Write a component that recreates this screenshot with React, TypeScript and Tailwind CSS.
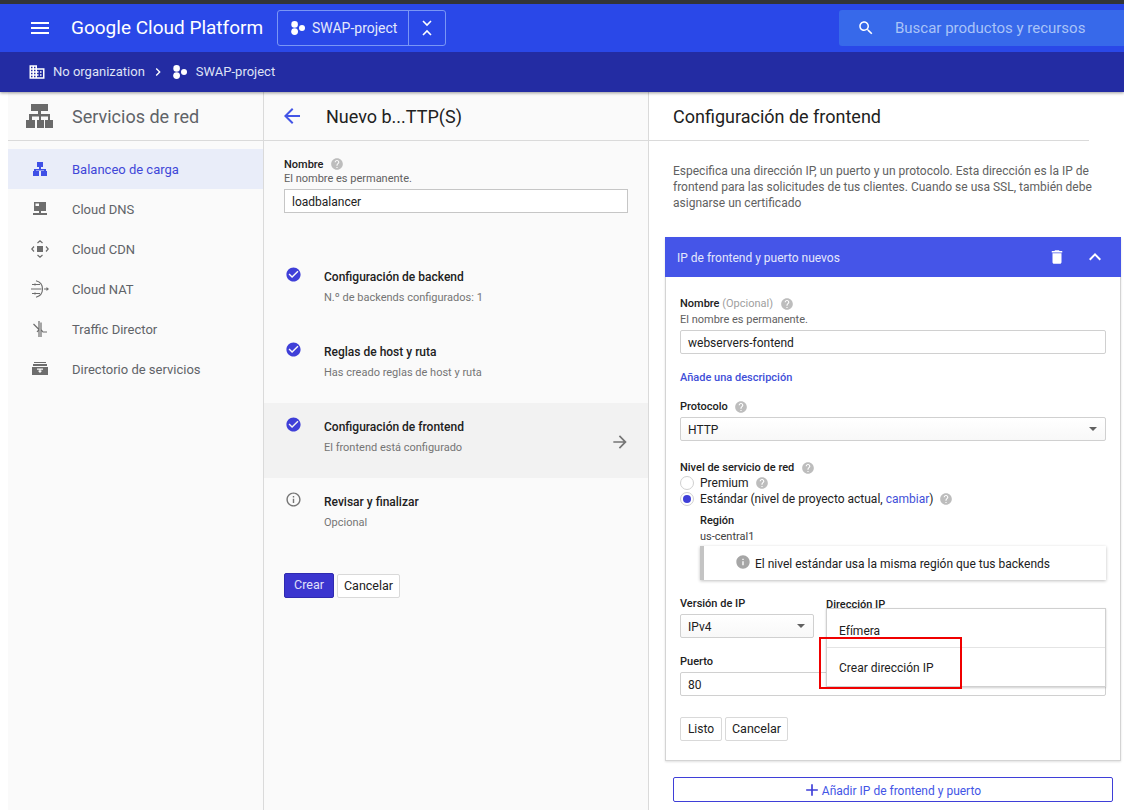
import type { ReactNode } from 'react';

// material style icons
const Icon = ({ d, className }: { d: string; className?: string }) => (
  <svg viewBox="0 0 24 24" className={className} fill="currentColor">
    <path d={d} />
  </svg>
);

const HELP =
  'M12 2C6.48 2 2 6.48 2 12s4.48 10 10 10 10-4.48 10-10S17.52 2 12 2zm1 17h-2v-2h2v2zm2.07-7.75l-.9.92C13.45 12.9 13 13.5 13 15h-2v-.5c0-1.1.45-2.1 1.17-2.83l1.24-1.26c.37-.36.59-.86.59-1.41 0-1.1-.9-2-2-2s-2 .9-2 2H8c0-2.21 1.79-4 4-4s4 1.79 4 4c0 .88-.36 1.68-.93 2.25z';
const CHECK =
  'M12 2C6.48 2 2 6.48 2 12s4.48 10 10 10 10-4.48 10-10S17.52 2 12 2zm-2 15l-5-5 1.41-1.41L10 14.17l7.59-7.59L19 8l-9 9z';
const INFO_OUTLINE =
  'M11 17h2v-6h-2v6zm1-15C6.48 2 2 6.48 2 12s4.48 10 10 10 10-4.48 10-10S17.52 2 12 2zm0 18c-4.41 0-8-3.59-8-8s3.59-8 8-8 8 3.59 8 8-3.59 8-8 8zM11 9h2V7h-2v2z';
const INFO =
  'M12 2C6.48 2 2 6.48 2 12s4.48 10 10 10 10-4.48 10-10S17.52 2 12 2zm1 15h-2v-6h2v6zm0-8h-2V7h2v2z';
const DOMAIN =
  'M12 7V3H2v18h20V7H12zM6 19H4v-2h2v2zm0-4H4v-2h2v2zm0-4H4V9h2v2zm0-4H4V5h2v2zm4 12H8v-2h2v2zm0-4H8v-2h2v2zm0-4H8V9h2v2zm0-4H8V5h2v2zm10 12h-8v-2h2v-2h-2v-2h2v-2h-2V9h8v10zm-2-8h-2v2h2v-2zm0 4h-2v2h2v-2z';

const Help = () => <Icon d={HELP} className="w-[14px] h-[14px] text-[#bdbdbd] shrink-0" />;

const ProjectDots = ({ className }: { className?: string }) => (
  <svg viewBox="0 0 14 14" className={className} fill="currentColor">
    <circle cx="3.6" cy="3.4" r="3.3" />
    <circle cx="3.6" cy="10.600" r="3.4" />
    <circle cx="11" cy="7" r="3" />
  </svg>
);

const Caret = () => (
  <svg viewBox="0 0 8 4" className="w-2 h-1 mr-px text-[#616161]" fill="currentColor">
    <path d="M0 0h8L4 4z" />
  </svg>
);

// drawn on an 18 unit grid, no matching icon in the packages
const navIcons: Record<string, ReactNode> = {
  balance: <path d="M6 2h6v5H10v2h5v2h1v5h-6v-5h3v-.6H5v.6h3v5H2v-5h1V9h5V7H6z" />,
  dns: <path d="M3 2h12v9H10v2h6v2H2v-2h6v-2H3zM4.500 3.500V6H8V3.500z" />,
  cdn: (
    <g>
      <rect x="6" y="6" width="6" height="6" />
      <path
        d="M6.500 3L9 .8 11.500 3M6.500 15L9 17.200 11.500 15M3 6.500L.8 9 3 11.500M15 6.500L17.200 9 15 11.500"
        fill="none"
        stroke="currentColor"
        strokeWidth="1.200"
      />
    </g>
  ),
  nat: (
    <g>
      <path
        d="M5 .8C9 1.800 11.500 5 11.500 9S9 16.200 5 17.200M1 4.500h8M0 9h10.500M1 13.500h8"
        fill="none"
        stroke="currentColor"
        strokeWidth="1.100"
      />
      <circle cx="4" cy="4.500" r="1" />
      <circle cx="4" cy="13.500" r="1" />
      <path d="M13 8.500h2.500V7L18 9l-2.500 2V9.500H13z" />
    </g>
  ),
  traffic: (
    <path
      d="M8 1v16M10 2.500V17M2.500 4L8 9.500M10 9.500l2 2.500h4M6 12l2-2.500"
      fill="none"
      stroke="currentColor"
      strokeWidth="1.200"
    />
  ),
  directory: (
    <path d="M3 2h12v1H3zM2 4h14v2H2zM1 7h16v8H1zM6 8.500v1.200h2.300v1H6.800L9 13l2.200-2.300H9.700v-1H12V8.500z" />
  ),
};

const navItems = [
  { key: 'balance', label: 'Balanceo de carga', active: true },
  { key: 'dns', label: 'Cloud DNS' },
  { key: 'cdn', label: 'Cloud CDN' },
  { key: 'nat', label: 'Cloud NAT' },
  { key: 'traffic', label: 'Traffic Director' },
  { key: 'directory', label: 'Directorio de servicios' },
];

const steps = [
  { title: 'Configuración de backend', sub: 'N.º de backends configurados: 1', icon: CHECK },
  { title: 'Reglas de host y ruta', sub: 'Has creado reglas de host y ruta', icon: CHECK },
  { title: 'Configuración de frontend', sub: 'El frontend está configurado', icon: CHECK, active: true },
  { title: 'Revisar y finalizar', sub: 'Opcional', icon: INFO_OUTLINE },
];

function TopBar() {
  return (
    <div className="shrink-0 relative z-10 shadow-[0_1px_3px_rgba(0,0,0,0.4)]">
      <div className="h-1 bg-[#333537]" />
      <div className="h-12 bg-[#2a48e8] flex items-center text-white">
        <Icon d="M3 18h18v-2H3v2zm0-5h18v-2H3v2zm0-7v2h18V6H3z" className="w-6 h-6 ml-[28px]" />
        <span className="ml-[19px] w-[192px] text-[19px] whitespace-nowrap">Google Cloud Platform</span>
        <div className="ml-[14px] h-9 w-[169px] flex border border-[#7a96f5] rounded-[3px]">
          <div className="w-[131px] flex items-center border-r border-[#7a96f5] pl-[13px] gap-[7px]">
            <ProjectDots className="w-[14px] h-[14px]" />
            <span className="text-[14px] text-[#e3e8fc]">SWAP-project</span>
          </div>
          <div className="flex-1 flex items-center justify-center">
            <svg viewBox="0 0 12 16" className="w-3 h-4" fill="none" stroke="currentColor" strokeWidth="1.600">
              <path d="M2 1l4 4 4-4M2 15l4-4 4 4" />
            </svg>
          </div>
        </div>
        <div className="ml-auto w-[285px] h-9 bg-[#3769ea] rounded-l-[3px] flex items-center">
          <Icon
            d="M15.500 14h-.79l-.28-.27C15.410 12.590 16 11.110 16 9.500 16 5.910 13.090 3 9.500 3S3 5.910 3 9.500 5.910 16 9.500 16c1.610 0 3.090-.59 4.230-1.570l.27.28v.79l5 4.990L20.490 19l-4.990-5zm-6 0C7.010 14 5 11.990 5 9.500S7.010 5 9.500 5 14 7.010 14 9.500 11.990 14 9.500 14z"
            className="w-[18px] h-[18px] ml-[18px]"
          />
          <span className="ml-[20px] text-[15px] text-[#a9c3f8] whitespace-nowrap">Buscar productos y recursos</span>
        </div>
      </div>
      <div className="h-10 bg-[#232ca3] flex items-center text-[#dfe2f5] text-[13px]">
        <Icon d={DOMAIN} className="w-[18px] h-[18px] ml-[28px] text-white" />
        <span className="ml-[7px]">No organization</span>
        <Icon d="M10 6L8.590 7.410 13.170 12l-4.580 4.590L10 18l6-6z" className="w-4 h-4 ml-[5px] text-white" />
        <ProjectDots className="w-[14px] h-[14px] ml-[7px] text-white" />
        <span className="ml-[9px]">SWAP-project</span>
      </div>
    </div>
  );
}

function Sidebar() {
  return (
    <aside className="ml-2 w-[256px] shrink-0 bg-[#fafafa] border-r border-[#dadada]">
      <div className="h-[49px] border-b border-[#dadada] flex items-center">
        <svg viewBox="0 0 27 24" className="ml-[18px] w-[27px] h-6 text-[#6a6a6a]" fill="currentColor">
          <path d="M5 0h17v7h-7v3h9v6h3v8h-8v-8h3v-3.500h-7V16h3v8h-7v-8h2v-3.500H6V16h3v8H0v-8h3v-6h9V7H5z" />
        </svg>
        <span className="ml-[19px] text-[18px] text-[#5f6368]">Servicios de red</span>
      </div>
      <nav className="pt-2">
        {navItems.map((item) => (
          <div
            key={item.key}
            className={`h-10 flex items-center text-[13px] ${
              item.active ? 'bg-[#e9edf9] text-[#3f47d8]' : 'text-[#5f6368]'
            }`}
          >
            <svg
              viewBox="0 0 18 18"
              className={`ml-[23px] w-[18px] h-[18px] ${item.active ? 'text-[#3f50e6]' : 'text-[#6d6d6d]'}`}
              fill="currentColor"
            >
              {navIcons[item.key]}
            </svg>
            <span className="ml-[23px] pt-[2px]">{item.label}</span>
          </div>
        ))}
      </nav>
    </aside>
  );
}

function Wizard() {
  return (
    <section className="w-[385px] shrink-0 bg-[#fafafa] border-r border-[#dadada]">
      <div className="h-[49px] border-b border-[#dadada] flex items-center">
        <Icon
          d="M20 11H7.830l5.590-5.590L12 4l-8 8 8 8 1.410-1.410L7.830 13H20v-2z"
          className="w-6 h-6 ml-4 text-[#4355e6]"
        />
        <span className="ml-[22px] text-[18px] text-[#212121]">Nuevo b...TTP(S)</span>
      </div>
      <div className="px-5 pt-[16px] h-[112px]">
        <div className="flex items-center gap-[6px] h-[14px]">
          <span className="text-[11px] pt-[2px] font-medium text-[#212121]">Nombre</span>
          <Help />
        </div>
        <div className="text-[11px] leading-[14px] mt-px text-[#616161]">El nombre es permanente.</div>
        <div className="mt-[3px] h-6 w-[344px] bg-white border border-[#c6c6c6] flex items-center px-[7px] pt-[2px] text-[12px] text-[#212121]">
          loadbalancer
        </div>
      </div>
      {steps.map((s) => (
        <div key={s.title} className={`h-[75px] flex pl-[21px] pt-[14px] relative ${s.active ? 'bg-[#f2f2f2]' : ''}`}>
          <Icon
            d={s.icon}
            className={`w-[17px] h-[17px] -mt-px shrink-0 ${s.icon === CHECK ? 'text-[#3f3fd8]' : 'text-[#757575]'}`}
          />
          <div className="ml-[22px] mt-[2px]">
            <div className="text-[12px] leading-[16px] font-medium text-[#212121]">{s.title}</div>
            <div className="mt-[5px] text-[11px] leading-[16px] text-[#757575]">{s.sub}</div>
          </div>
          {s.active && (
            <Icon
              d="M12 4l-1.410 1.410L16.170 11H4v2h12.170l-5.580 5.590L12 20l8-8z"
              className="w-5 h-5 absolute right-[18px] top-[29px] text-[#757575]"
            />
          )}
        </div>
      ))}
      <div className="mt-[20px] ml-5 flex gap-[3px]">
        <div className="h-[25px] w-[50px] bg-[#3b35cf] border border-[#2f2ab0] rounded-[2px] text-[12.500px] text-[#e0e0fa] flex items-center justify-center">
          Crear
        </div>
        <div className="h-[24px] w-[63px] mt-px bg-white border border-[#d9d9d9] rounded-[2px] text-[12.500px] text-[#212121] flex items-center justify-center">
          Cancelar
        </div>
      </div>
    </section>
  );
}

function FieldLabel({ children }: { children: ReactNode }) {
  return <div className="text-[11px] leading-[14px] font-medium text-[#212121] flex items-center gap-[6.5px]">{children}</div>;
}

function Field({ value, caret, className }: { value: string; caret?: boolean; className?: string }) {
  return (
    <div
      className={`h-6 border border-[#d0d0d0] rounded-[2px] flex items-center justify-between px-[7px] text-[12px] text-[#212121] ${
        caret ? 'bg-linear-to-b from-white to-[#f8f8f8]' : 'bg-white'
      } ${className ?? ''}`}
    >
      <span className="pt-[2px]">{value}</span>
      {caret && <Caret />}
    </div>
  );
}

function FrontendCard() {
  return (
    <div className="ml-4 w-[456px] shadow-[0_1px_2px_rgba(0,0,0,0.12)]">
      <div className="h-10 bg-[#4555e8] flex items-center text-white">
        <span className="ml-3 pt-[2px] text-[12px] text-[#e4e7fc]">IP de frontend y puerto nuevos</span>
        <Icon
          d="M6 19c0 1.100.9 2 2 2h8c1.100 0 2-.9 2-2V7H6v12zM19 4h-3.500l-1-1h-5l-1 1H5v2h14V4z"
          className="w-[18px] h-[18px] ml-auto"
        />
        <Icon d="M12 8l-6 6 1.410 1.410L12 10.830l4.590 4.580L18 14z" className="w-6 h-6 ml-[17px] mr-[14px]" />
      </div>
      <div className="relative border border-t-0 border-[#d4d4d4] px-[14px] pt-[20px] h-[484px] bg-white">
        <FieldLabel>
          <span>
            Nombre <span className="font-normal text-[#a0a0a0]">(Opcional)</span>
          </span>
          <Help />
        </FieldLabel>
        <div className="text-[11px] leading-[14px] mt-[2px] text-[#616161]">El nombre es permanente.</div>
        <Field value="webservers-fontend" className="mt-[3px]" />
        <div className="mt-[17px] text-[11px] leading-[14px] font-medium text-[#3f4fd8]">Añade una descripción</div>
        <div className="mt-[15px]">
          <FieldLabel>
            Protocolo
            <Help />
          </FieldLabel>
        </div>
        <Field value="HTTP" caret className="mt-[3px]" />
        <div className="mt-[20px]">
          <FieldLabel>
            Nivel de servicio de red
            <Help />
          </FieldLabel>
        </div>
        <div className="h-4 flex items-center text-[12px] text-[#212121]">
          <span className="w-[14px] h-[14px] rounded-full border border-[#d0d0d0] bg-white" />
          <span className="ml-[6px]">Premium</span>
          <span className="ml-[7px]">
            <Help />
          </span>
        </div>
        <div className="h-4 flex items-center text-[12px] text-[#212121]">
          <span className="w-[14px] h-[14px] rounded-full border border-[#d0d0d0] bg-white flex items-center justify-center">
            <span className="w-2 h-2 rounded-full bg-[#3f3fd8]" />
          </span>
          <span className="ml-[6px]">
            Estándar (nivel de proyecto actual, <span className="text-[#3f4fd8]">cambiar</span>)
          </span>
          <span className="ml-[6px]">
            <Help />
          </span>
        </div>
        <div className="ml-5">
          <div className="mt-[6px] text-[11px] leading-[16px] font-medium text-[#212121]">Región</div>
          <div className="text-[11px] leading-[16px] text-[#424242]">us-central1</div>
          <div className="mt-px h-[34px] border-l-4 border-[#c4c4c4] bg-white shadow-[0_1px_3px_rgba(0,0,0,0.25)] flex items-center pl-[31px] text-[12px] text-[#212121]">
            <Icon d={INFO} className="w-4 h-4 text-[#a6a6a6] -mt-[2px]" />
            <span className="ml-[4px] pt-[2px]">El nivel estándar usa la misma región que tus backends</span>
          </div>
        </div>
        <div className="mt-[17px]">
          <FieldLabel>Versión de IP</FieldLabel>
        </div>
        <Field value="IPv4" caret className="mt-[3px] w-[134px]" />
        <div className="mt-[17px]">
          <FieldLabel>Puerto</FieldLabel>
        </div>
        <Field value="80" className="mt-[3px]" />
        <div className="mt-[21px] flex gap-[3px]">
          <div className="h-6 w-[42px] bg-white border border-[#d9d9d9] rounded-[2px] text-[12px] text-[#212121] flex items-center justify-center">
            Listo
          </div>
          <div className="h-6 w-[63px] bg-white border border-[#d9d9d9] rounded-[2px] text-[12.500px] text-[#212121] flex items-center justify-center">
            Cancelar
          </div>
        </div>

        {/* open dropdown over the port field */}
        <div className="absolute left-[160px] top-[321px] text-[11px] leading-[14px] font-medium text-[#212121]">
          Dirección IP
        </div>
        <div className="absolute left-[160px] top-[331px] w-[280px] h-[79px] bg-white border border-[#d0d0d0] shadow-[0_1px_2px_rgba(0,0,0,0.2)] text-[12px] text-[#212121]">
          <div className="h-[39px] border-b border-[#e4e4e4] flex items-center pl-3 pt-[5px]">Efímera</div>
          <div className="h-[39px] flex items-center pl-3">Crear dirección IP</div>
        </div>
        <div className="absolute left-[153px] top-[360px] w-[143px] h-[52px] border-2 border-[#f00000]" />
      </div>
    </div>
  );
}

function FrontendPanel() {
  return (
    <section className="flex-1 min-w-0 bg-white">
      <div className="h-[49px] w-[440px] border-b border-[#dadada] flex items-center pl-6 text-[18px] text-[#212121]">
        Configuración de frontend
      </div>
      <p className="ml-6 mt-[22px] w-[425px] text-[12px] leading-[16px] text-[#616161]">
        Especifica una dirección IP, un puerto y un protocolo. Esta dirección es la IP de frontend para las solicitudes
        de tus clientes. Cuando se usa SSL, también debe asignarse un certificado
      </p>
      <div className="mt-[26px]">
        <FrontendCard />
      </div>
      <div className="ml-6 mt-4 h-[25px] w-[440px] border border-[#3f3fd8] rounded-[2px] flex items-center justify-center text-[12px] text-[#4355e6]">
        <Icon d="M19 13h-6v6h-2v-6H5v-2h6V5h2v6h6v2z" className="w-5 h-5 -ml-[3px] text-[#3f3fd8]" />
        <span className="pt-[2px]">Añadir IP de frontend y puerto</span>
      </div>
    </section>
  );
}

export default function App() {
  return (
    <div className="w-[1124px] h-[810px] overflow-hidden bg-white flex flex-col font-['Roboto',sans-serif]">
      <TopBar />
      <div className="flex-1 flex min-h-0">
        <Sidebar />
        <Wizard />
        <FrontendPanel />
      </div>
    </div>
  );
}
